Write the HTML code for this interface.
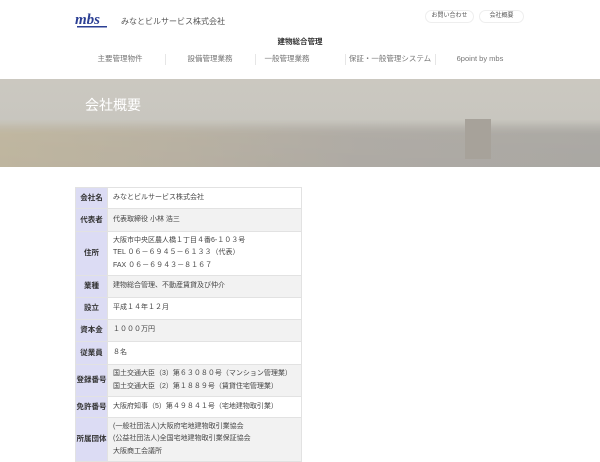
<!DOCTYPE html>
<html><head><meta charset="utf-8"><style>
*{margin:0;padding:0;box-sizing:border-box}
body{width:600px;height:450px;overflow:hidden;background:#fff;font-family:"Liberation Sans","Noto Sans CJK JP",sans-serif;color:#444;position:relative}
.abs{position:absolute}
.btn{position:absolute;top:10px;height:13px;border:1px solid #eee;border-radius:7px;font-size:6px;line-height:11px;text-align:center;color:#555}
.nav{position:absolute;top:53px;font-size:7.5px;color:#777;text-align:center;width:90px;line-height:12px}
.sep{position:absolute;top:54px;width:1px;height:11px;background:#e6e6e6}
.banner{position:absolute;left:0;top:79px;width:600px;height:88px;background:linear-gradient(180deg,#cbc8c0 0%,#c8c6bf 50%,#b6b2a9 65%,#aaa69f 100%)}
table{position:absolute;left:75px;top:187px;width:227px;border-collapse:collapse;font-size:7px}
td{border:1px solid #e2e2e2;padding:0 5px;line-height:12.5px;color:#444}
td.h{background:#dcdcf4;width:32px;font-weight:bold;text-align:center;padding:0;color:#333;font-size:7.5px}
tr.g td:not(.h){background:#f2f2f2}
</style></head><body>
<svg class="abs" style="left:74px;top:11px" width="46" height="20"><text x="1" y="13" font-family="Liberation Serif,serif" font-style="italic" font-weight="bold" font-size="15" fill="#2b3f94">mbs</text><rect x="3" y="15" width="30" height="1.5" fill="#2b3f94"/></svg>
<div class="abs" style="left:121px;top:16px;font-size:8px;color:#555">みなとビルサービス株式会社</div>
<div class="btn" style="left:425px;width:49px">お問い合わせ</div>
<div class="btn" style="left:479px;width:45px">会社概要</div>
<div class="abs" style="left:0;width:600px;top:36px;text-align:center;font-size:7.5px;font-weight:bold;color:#333">建物総合管理</div>
<div class="nav" style="left:75px">主要管理物件</div>
<div class="sep" style="left:165px"></div>
<div class="nav" style="left:165px">設備管理業務</div>
<div class="sep" style="left:255px"></div>
<div class="nav" style="left:242px">一般管理業務</div>
<div class="sep" style="left:345px"></div>
<div class="nav" style="left:345px">保証・一般管理システム</div>
<div class="sep" style="left:435px"></div>
<div class="nav" style="left:435px">6point by mbs</div>
<div class="banner">
<div class="abs" style="left:0;top:40px;width:600px;height:48px;background:linear-gradient(90deg,#c2b89f 0%,#bab2a2 30%,#afaba5 60%,#aaa8a4 100%);opacity:.85;-webkit-mask-image:linear-gradient(180deg,transparent,#000 30%)"></div>
<div class="abs" style="left:465px;top:40px;width:26px;height:40px;background:#a7a29a"></div>
<div class="abs" style="left:85px;top:16px;font-size:14px;color:#fff">会社概要</div>
</div>
<table>
<tr style="height:21px"><td class="h">会社名</td><td>みなとビルサービス株式会社</td></tr>
<tr class="g" style="height:23px"><td class="h">代表者</td><td>代表取締役 小林 浩三</td></tr>
<tr style="height:44px"><td class="h">住所</td><td>大阪市中央区農人橋１丁目４番6-１０３号<br>TEL ０６－６９４５－６１３３（代表）<br>FAX ０６－６９４３－８１６７</td></tr>
<tr class="g" style="height:22px"><td class="h">業種</td><td>建物総合管理、不動産賃貸及び仲介</td></tr>
<tr style="height:22px"><td class="h">設立</td><td>平成１４年１２月</td></tr>
<tr class="g" style="height:22px"><td class="h">資本金</td><td>１０００万円</td></tr>
<tr style="height:23px"><td class="h">従業員</td><td>８名</td></tr>
<tr class="g" style="height:32px"><td class="h">登録番号</td><td>国土交通大臣（3）第６３０８０号（マンション管理業）<br>国土交通大臣（2）第１８８９号（賃貸住宅管理業）</td></tr>
<tr style="height:21px"><td class="h">免許番号</td><td>大阪府知事（5）第４９８４１号（宅地建物取引業）</td></tr>
<tr class="g" style="height:44px"><td class="h">所属団体</td><td>(一般社団法人)大阪府宅地建物取引業協会<br>(公益社団法人)全国宅地建物取引業保証協会<br>大阪商工会議所</td></tr>
</table>
</body></html>
